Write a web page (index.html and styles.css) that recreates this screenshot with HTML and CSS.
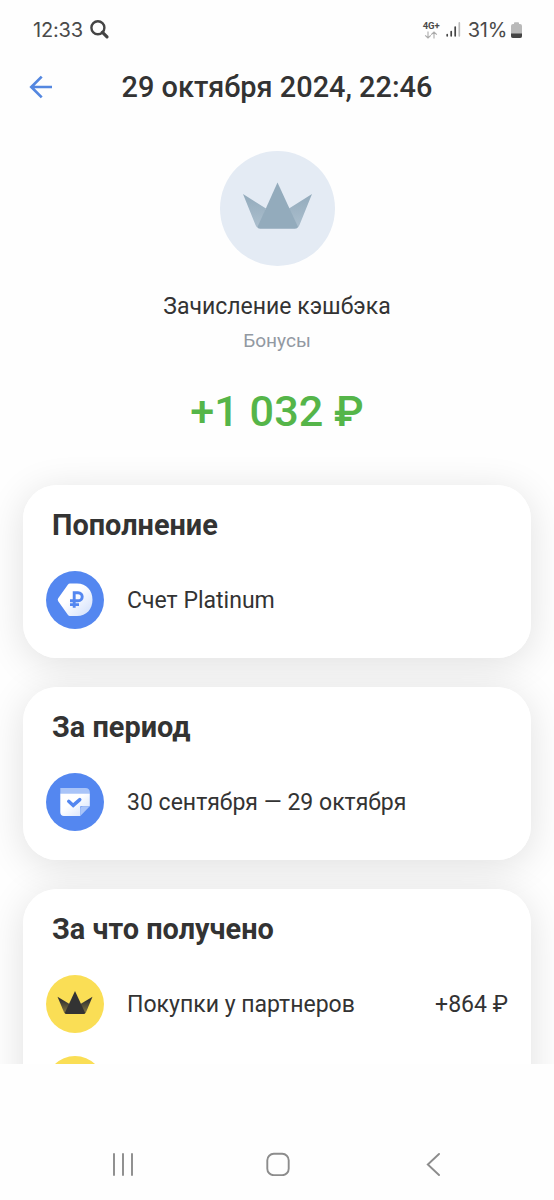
FILE: index.html
```html
<!DOCTYPE html>
<html lang="ru">
<head>
    <meta charset="UTF-8">
    <title>Зачисление кэшбэка</title>
    <link rel="stylesheet" href="styles.css">
</head>
<body>
    <main class="screen">
        <!-- Status bar -->
        <div class="status">
            <span class="time">12:33</span>
            <svg class="search" width="20" height="20" viewBox="0 0 20 20">
                <circle cx="7.9" cy="7.7" r="6.5"/>
                <path d="M12.5,12.3 L17,16.8" stroke-width="3.2"/>
            </svg>
            <div class="network">
                <span>4G+</span>
                <svg width="14" height="8" viewBox="0 0 14 8">
                    <path d="M4,0.5 V7 M1.2,4.3 L4,7 L6.8,4.3 M10,7.5 V1 M7.2,3.7 L10,1 L12.8,3.7"/>
                </svg>
            </div>
            <svg class="signal" width="15" height="16" viewBox="0 0 15 16">
                <path d="M1.2,12.7 V13.8 M5.2,9.5 V13.8 M9.2,5 V13.8"/>
                <path class="weak" d="M13.3,0.9 V13.8"/>
            </svg>
            <span class="percent">31%</span>
            <svg class="battery" width="11" height="17" viewBox="0 0 11 17">
                <path fill="#b9b9b9" d="M3,2 V1 Q3,0.3 3.8,0.3 H7.2 Q8,0.3 8,1 V2 H9 Q11,2 11,4 V14 Q11,16 9,16 H2 Q0,16 0,14 V4 Q0,2 2,2 Z"/>
                <path fill="#444" d="M0,11.5 H11 V14 Q11,16 9,16 H2 Q0,16 0,14 Z"/>
            </svg>
        </div>

        <header class="header">
            <svg class="back" width="24" height="24" viewBox="0 0 24 24">
                <path d="M23,12 H2.5 M12.7,1.6 L2.3,12 L12.7,22.4"/>
            </svg>
            <h1>29 октября 2024, 22:46</h1>
        </header>

        <section class="summary">
            <svg class="logo" width="115" height="115" viewBox="0 0 115 115">
                <defs>
                    <linearGradient id="wingGrad" x1="0" y1="0" x2="0" y2="1">
                        <stop offset="0%" stop-color="#93abbc"/>
                        <stop offset="100%" stop-color="#acbfce"/>
                    </linearGradient>
                </defs>
                <circle cx="57.5" cy="57.5" r="57.5" fill="#e4ebf4"/>
                <path fill="url(#wingGrad)" d="M23,43 L46,57.5 L39,77.5 Q36.5,77 35.5,74 Z"/>
                <path fill="url(#wingGrad)" d="M92,43 L69,57.5 L76,77.5 Q78.5,77 79.5,74 Z"/>
                <path fill="#93abbc" d="M57.5,31.5 L78,76 Q77,77.7 75,77.7 H40 Q38,77.7 37.5,76 Z"/>
            </svg>
            <h2>Зачисление кэшбэка</h2>
            <p class="category">Бонусы</p>
            <p class="amount">+1 032 ₽</p>
        </section>

        <div class="cards">
            <section class="card">
                <h3>Пополнение</h3>
                <div class="row">
                    <svg class="icon" viewBox="0 0 58 58">
                        <defs>
                            <linearGradient id="tagGrad" x1="0" y1="0" x2="1" y2="1">
                                <stop offset="40%" stop-color="#fff"/>
                                <stop offset="100%" stop-color="#cfdefb"/>
                            </linearGradient>
                        </defs>
                        <circle cx="29" cy="29" r="29" fill="#5487f0"/>
                        <path fill="url(#tagGrad)" d="M24,12.5 H31 C40.5,12.5 46.5,19.5 46.5,28.7 C46.5,38 40.5,45 31,45 H24 Q22.7,45 22,44 L12.2,30.2 Q11.2,28.7 12.2,27.2 L22,13.5 Q22.7,12.5 24,12.5 Z"/>
                        <path class="ruble" d="M28.2,36.8 V21.8 H32 C37.6,21.8 37.6,29.8 32,29.8 H24 M24,33.6 H33"/>
                    </svg>
                    <span>Счет Platinum</span>
                </div>
            </section>

            <section class="card">
                <h3>За период</h3>
                <div class="row">
                    <svg class="icon" viewBox="0 0 58 58">
                        <circle cx="29" cy="29" r="29" fill="#5487f0"/>
                        <path fill="#a9c4f8" d="M14.3,15 H39.5 Q43.8,15 43.8,19.5 V21 H14.3 Z"/>
                        <path fill="url(#tagGrad)" d="M14.3,20.7 H43.8 V33.3 H34.3 V43 H18 Q14.3,43 14.3,39.3 Z"/>
                        <path fill="#a9c4f8" d="M34.3,43 V36.5 Q34.3,33.3 37.5,33.3 H43.8 Z"/>
                        <path class="check" d="M22.7,28.3 L27.2,32.4 L33.8,26.6"/>
                    </svg>
                    <span>30 сентября — 29 октября</span>
                </div>
            </section>

            <section class="card">
                <h3>За что получено</h3>
                <div class="row">
                    <svg class="icon" viewBox="0 0 58 58">
                        <defs>
                            <linearGradient id="darkWing" x1="0" y1="0" x2="0" y2="1">
                                <stop offset="20%" stop-color="#333"/>
                                <stop offset="100%" stop-color="#8a7c40"/>
                            </linearGradient>
                        </defs>
                        <circle cx="29" cy="29" r="29" fill="#fade55"/>
                        <path fill="url(#darkWing)" d="M11.5,21.7 L23.5,29 L20.5,39 Q18.7,38.8 18,37.3 Z"/>
                        <path fill="url(#darkWing)" d="M46.5,21.7 L34.5,29 L37.5,39 Q39.3,38.8 40,37.3 Z"/>
                        <path fill="#333" d="M29,16 L39.2,38 Q38.8,39 37.5,39 H20.5 Q19.2,39 18.8,38 Z"/>
                    </svg>
                    <span>Покупки у партнеров</span>
                    <span class="sum">+864 ₽</span>
                </div>
                <div class="row">
                    <svg class="icon" viewBox="0 0 58 58">
                        <circle cx="29" cy="29" r="29" fill="#fade55"/>
                    </svg>
                </div>
            </section>
        </div>
    </main>

    <!-- System navigation -->
    <nav class="navbar">
        <svg width="24" height="24" viewBox="0 0 24 24">
            <path d="M3,2 V23 M12,2 V23 M21,2 V23"/>
        </svg>
        <svg width="24" height="24" viewBox="0 0 24 24">
            <rect x="1.3" y="1.8" width="21.4" height="21.4" rx="6.5"/>
        </svg>
        <svg width="24" height="24" viewBox="0 0 24 24">
            <path d="M18,2 L6.8,12.5 L18,23"/>
        </svg>
    </nav>
</body>
</html>
```
FILE: styles.css
```css
* {
    box-sizing: border-box;
}
body {
    margin: 0;
    height: 1200px;
    background: #fefefe;
    color: #333;
    font-family: Roboto, "Noto Sans", sans-serif;
    overflow: hidden;
}
h1, h2, h3, p {
    margin: 0;
}
svg {
    display: block;
    flex: none;
}
.screen {
    height: 1064px;
    overflow: hidden;
}

/* Status bar */
.status {
    display: flex;
    align-items: center;
    height: 60px;
    padding: 0 32px 0 33px;
    color: #4a4a4a;
    font-family: Inter, Roboto, sans-serif;
    font-size: 20px;
}
.time {
    letter-spacing: -0.2px;
}
.percent {
    letter-spacing: -0.3px;
}
.search {
    margin-left: 7px;
    fill: none;
    stroke: #444;
    stroke-width: 2.4;
    stroke-linecap: round;
}
.network {
    display: flex;
    flex-direction: column;
    align-items: center;
    margin-left: auto;
    font-family: Roboto, sans-serif;
    font-size: 9.5px;
    font-weight: 700;
    line-height: 10px;
}
.network svg {
    fill: none;
    stroke: #aaa;
    stroke-width: 1.1;
}
.signal {
    margin: 0 7px 0 6px;
    fill: none;
    stroke: #444;
    stroke-width: 1.7;
    stroke-linecap: round;
}
.signal .weak {
    stroke: #bbb;
}
.battery {
    margin-left: 4px;
}

/* Header */
.header {
    display: grid;
    grid-template-columns: 24px 1fr 24px;
    align-items: center;
    height: 54px;
    padding: 0 29px;
}
.header h1 {
    font-size: 28.9px;
    font-weight: 500;
    line-height: 34px;
    text-align: center;
}
.back {
    fill: none;
    stroke: #5487e0;
    stroke-width: 2.7;
}

/* Operation summary */
.summary {
    display: flex;
    flex-direction: column;
    align-items: center;
    height: 371px;
    padding-top: 37px;
}
.summary h2 {
    margin-top: 27px;
    font-size: 23px;
    font-weight: 400;
    line-height: 28px;
}
.category {
    margin-top: 8px;
    color: #9299a2;
    font-size: 19.1px;
    line-height: 24px;
}
.amount {
    margin-top: 34px;
    color: #55b549;
    font-size: 43.2px;
    font-weight: 500;
    line-height: 50px;
}

/* Cards */
.cards {
    display: flex;
    flex-direction: column;
    gap: 29px;
    padding: 0 23px;
}
.card {
    position: relative;
    padding: 23px 23px 29px;
    border-radius: 34px;
    background: #fff;
}
/* The shadow sits below every card, so it never darkens a neighbour */
.card::before {
    content: "";
    position: absolute;
    inset: 0;
    z-index: -1;
    border-radius: 34px;
    box-shadow: 0 6px 38px rgba(0, 0, 0, 0.12);
}
.card h3 {
    margin: 0 0 29px 6px;
    font-size: 28.9px;
    font-weight: 700;
    line-height: 34px;
}
.row {
    display: flex;
    align-items: center;
    height: 58px;
    font-size: 23.04px;
}
.row + .row {
    margin-top: 23px;
}
.icon {
    width: 58px;
    height: 58px;
    margin-right: 23px;
}
.sum {
    margin-left: auto;
}
.ruble {
    fill: none;
    stroke: #5487f0;
    stroke-width: 2.9;
}
.check {
    fill: none;
    stroke: #5487f0;
    stroke-width: 3.4;
    stroke-linecap: round;
}

/* System navigation */
.navbar {
    display: flex;
    justify-content: space-between;
    padding: 88px 109px 0 111px;
}
.navbar svg {
    fill: none;
    stroke: #8c8c8c;
    stroke-width: 1.9;
    stroke-linecap: round;
}
```
